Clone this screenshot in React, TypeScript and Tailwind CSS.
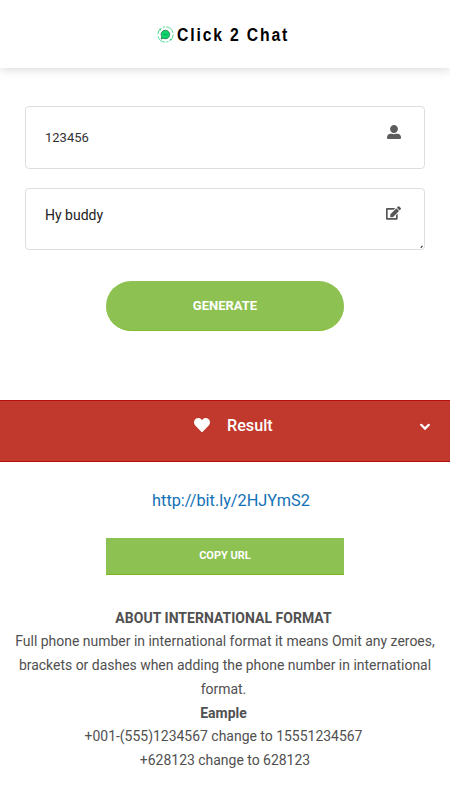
import { FaEdit, FaHeart, FaUserAlt } from "react-icons/fa";

const ABOUT = [
  { text: "ABOUT INTERNATIONAL FORMAT", style: "font-bold tracking-[0.05px] pr-[3px]" },
  { text: "Full phone number in international format it means Omit any zeroes,", style: "" },
  { text: "brackets or dashes when adding the phone number in international", style: "" },
  { text: "format.", style: "pr-[3px]" },
  { text: "Eample", style: "font-bold pr-[3px]" },
  { text: "+001-(555)1234567 change to 15551234567", style: "pr-[3px]" },
  { text: "+628123 change to 628123", style: "" },
];

function Logo() {
  return (
    <svg viewBox="0 0 16 16" fill="none" className="-ml-px h-[17px] w-[17px] shrink-0">
      <circle
        cx="8"
        cy="8"
        r="7.2"
        stroke="#35d47f"
        strokeWidth="0.8"
        strokeDasharray="7 1.5 2 1.2 9 2"
      />
      <path
        d="M8 4a4 4 0 1 1-1.9 7.55L3.9 12.2l.55-2.1A4 4 0 0 1 8 4z"
        fill="#10d46c"
        stroke="#1f7a4b"
        strokeWidth="0.8"
      />
      <path d="M6 8h4" stroke="#0c9a50" strokeWidth="0.7" />
      <path d="M12.3 12.5l1.3.5M2.3 3.2l1.3.5" stroke="#10d46c" strokeWidth="1.2" />
    </svg>
  );
}

export default function App() {
  return (
    <div
      className="flex h-[800px] w-full flex-col overflow-hidden bg-white"
      style={{ fontFamily: "Roboto, sans-serif" }}
    >
      {/* Header */}
      <header className="flex h-[68px] shrink-0 items-center justify-center gap-[3px] shadow-[0_1px_10px_rgba(0,0,0,0.17)]">
        <Logo />
        <h1
          className="w-[115px] origin-left scale-x-[0.875] pt-[2px] text-[18px] leading-none font-bold tracking-[2.1px] whitespace-nowrap text-black"
          style={{ fontFamily: "'Liberation Sans', sans-serif" }}
        >
          Click 2 Chat
        </h1>
      </header>

      {/* Form */}
      <main className="flex flex-col px-[25px] pt-[38px]">
        <div className="flex h-[63px] justify-between rounded-[4px] border border-[#dedede] pr-[23px] pl-[19px]">
          <span className="pt-[21px] text-[13px] leading-5 text-[#333]">123456</span>
          <FaUserAlt className="mt-[18px] h-[14px] w-[14px] text-[#5c5c5c]" />
        </div>

        <div className="relative mt-[19px] flex h-[62px] justify-between rounded-[4px] border border-[#dedede] pr-[23px] pl-[19px]">
          <span className="pt-4 text-[14px] leading-5 text-[#222]">Hy buddy</span>
          <FaEdit className="mt-[17px] h-[14px] w-[15px] text-[#555]" />
          <svg viewBox="0 0 3 3" className="absolute right-px bottom-px h-[3px] w-[3px]">
            <path d="M.8 2.8l1.6-2" stroke="#444" strokeWidth="1.3" />
          </svg>
        </div>

        <button className="mx-auto mt-[31px] h-[50px] w-[238px] rounded-full border-b border-[#7fbd2c] bg-[#8dc152] pt-px text-[13px] font-bold text-white">
          GENERATE
        </button>
      </main>

      {/* Result bar */}
      <section className="mt-[69px] flex h-[62px] shrink-0 items-start border-y border-[#b50f0c] bg-[#c1382c] pr-5 pl-[194px] text-white">
        <FaHeart className="mt-4 h-4 w-4" />
        <span className="ml-[17px] pt-[13px] text-[16.2px] leading-6 font-medium">Result</span>
        <svg viewBox="0 0 10 8" fill="none" className="mt-[21.5px] ml-auto h-2 w-[10px]">
          <path d="M1.2 1.8L5 5.6l3.8-3.8" stroke="currentColor" strokeWidth="2.2" strokeLinecap="round" />
        </svg>
      </section>

      <section className="flex flex-col items-center text-center">
        <a className="mt-[27px] ml-3 text-[16.3px] leading-6 text-[#1271b5]">http://bit.ly/2HJYmS2</a>
        <button className="mt-[25px] h-[37px] w-[238px] border-b border-[#7ab51d] bg-[#8dc152] text-[11px] font-bold text-white">
          COPY URL
        </button>

        {/* Help text */}
        <div className="mt-[31.5px] text-[13.96px] leading-[23.8px] text-[#505050]">
          {ABOUT.map((line) => (
            <p key={line.text} className={`whitespace-nowrap ${line.style}`}>
              {line.text}
            </p>
          ))}
        </div>
      </section>
    </div>
  );
}
